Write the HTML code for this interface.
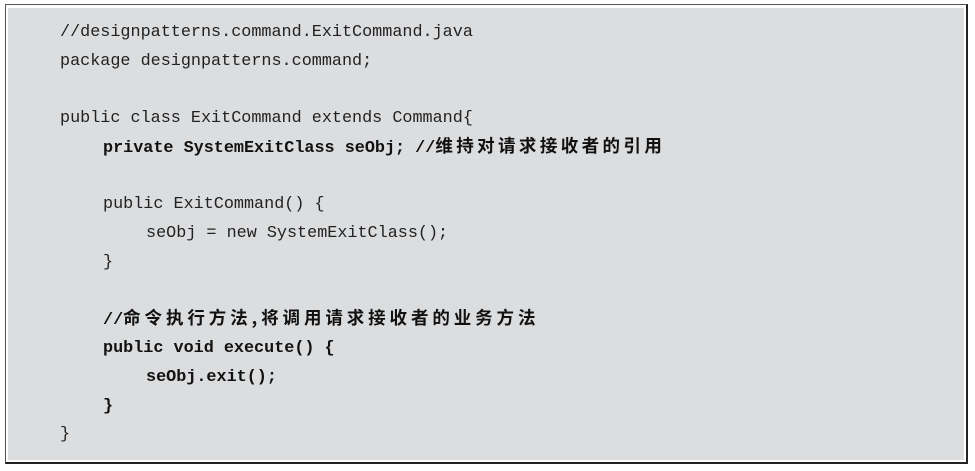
<!DOCTYPE html>
<html><head><meta charset="utf-8"><style>
body{margin:0;width:975px;height:471px;background:#fff;position:relative;overflow:hidden}
.box{position:absolute;left:5px;top:4px;width:960px;height:457px;border:1px solid #555;border-right:2px solid #222;border-bottom:2px solid #222;background:#fff}
.in{position:absolute;left:2px;top:3px;right:2px;bottom:2px;background:#dcdddf}
.l{position:absolute;font-family:"Liberation Mono","Noto Sans CJK SC",monospace;font-size:16.8px;color:#222;white-space:pre;line-height:20px}
b{font-weight:bold;color:#111}
.c{font-family:"Noto Sans CJK SC",sans-serif;font-size:17.5px;letter-spacing:3.4px;line-height:20px}
</style></head><body>
<div class="box"><div class="in"></div></div>
<div class="l" style="left:60px;top:23px">//designpatterns.command.ExitCommand.java</div>
<div class="l" style="left:60px;top:52px">package designpatterns.command;</div>
<div class="l" style="left:60px;top:109px">public class ExitCommand extends Command{</div>
<div class="l" style="left:103px;top:136px"><b>private SystemExitClass seObj; //<span class="c">维持对请求接收者的引用</span></b></div>
<div class="l" style="left:103px;top:195px">public ExitCommand() {</div>
<div class="l" style="left:146px;top:224px">seObj = new SystemExitClass();</div>
<div class="l" style="left:103px;top:253px">}</div>
<div class="l" style="left:103px;top:308px"><b>//<span class="c" style="letter-spacing:3.9px">命令执行方法,将调用请求接收者的业务方法</span></b></div>
<div class="l" style="left:103px;top:339px"><b>public void execute() {</b></div>
<div class="l" style="left:146px;top:368px"><b>seObj.exit();</b></div>
<div class="l" style="left:103px;top:397px"><b>}</b></div>
<div class="l" style="left:60px;top:425px">}</div>
</body></html>
